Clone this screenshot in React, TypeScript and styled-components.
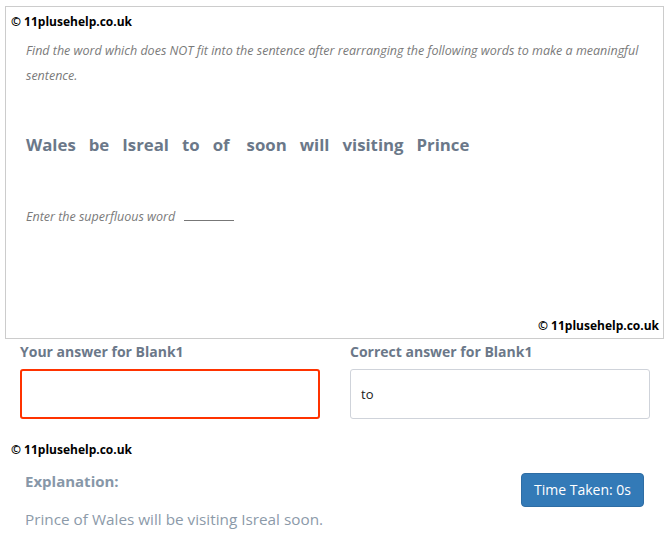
import React from "react";
import styled, { createGlobalStyle } from "styled-components";

const Global = createGlobalStyle`
  html, body { margin: 0; padding: 0; background: #fff; }
  body { font-family: "Open Sans", "Liberation Sans", sans-serif; }
  * { box-sizing: border-box; }
`;

const Page = styled.div`
  width: 669px;
  padding: 6px 5px 0 5px;
`;

const QuestionCard = styled.div`
  width: 659px;
  height: 333px;
  border: 1px solid #cccccc;
  display: flex;
  flex-direction: column;
`;

const Watermark = styled.div<{ $align?: "left" | "right" }>`
  font-family: "Open Sans", sans-serif;
  font-weight: 700;
  font-size: 12px;
  line-height: 16px;
  color: #000;
  text-align: ${(p) => p.$align ?? "left"};
`;

const TopMark = styled(Watermark)`
  padding: 7px 0 0 5px;
`;

const BottomMark = styled(Watermark)`
  margin-top: auto;
  padding: 0 4px 4px 0;
`;

const Instruction = styled.p`
  margin: 8px 0 0 0;
  padding: 0 10px 0 20px;
  font-style: italic;
  font-size: 12.5px;
  line-height: 25px;
  color: #7a7a7a;
`;

const WordRow = styled.div`
  display: flex;
  gap: 13px;
  padding-left: 20px;
  margin-top: 45px;
  font-size: 16.8px;
  font-weight: 700;
  line-height: 24px;
  color: #6b7889;
`;

const Word = styled.span<{ $extra?: boolean }>`
  margin-right: ${(p) => (p.$extra ? "4px" : "0")};
`;

const Prompt = styled.div`
  margin-top: 50px;
  padding-left: 20px;
  font-style: italic;
  font-size: 12.5px;
  line-height: 18px;
  color: #7a7a7a;
`;

const Blank = styled.span`
  display: inline-block;
  margin-left: 9px;
  width: 50px;
  border-bottom: 1px solid #777;
  height: 14px;
  vertical-align: baseline;
`;

const AnswerRow = styled.div`
  display: grid;
  grid-template-columns: 300px 300px;
  column-gap: 30px;
  padding: 3px 0 0 15px;
`;

const AnswerCol = styled.div`
  display: flex;
  flex-direction: column;
`;

const Label = styled.div`
  font-size: 14px;
  font-weight: 700;
  line-height: 20px;
  color: #6b7889;
  margin-bottom: 7px;
`;

const AnswerBox = styled.div<{ $wrong?: boolean }>`
  height: 50px;
  border: ${(p) => (p.$wrong ? "2px solid #ff3300" : "1px solid #cfd3da")};
  border-radius: 3px;
  display: flex;
  align-items: center;
  padding-left: 10px;
  font-size: 13px;
  color: #222;
`;

const MidMark = styled(Watermark)`
  margin-top: 23px;
  padding-left: 6px;
`;

const ExplainSection = styled.div`
  padding: 0 20px 0 20px;
  margin-top: 15px;
`;

const ExplainHeader = styled.div`
  display: flex;
  justify-content: space-between;
  align-items: center;
`;

const ExplainTitle = styled.div`
  font-size: 15px;
  font-weight: 700;
  color: #8797a8;
  line-height: 20px;
  margin-top: -18px;
`;

const TimeButton = styled.button`
  font-family: "Open Sans", sans-serif;
  font-size: 14px;
  line-height: 20px;
  color: #fff;
  background: #337ab7;
  border: 1px solid #2e6da4;
  border-radius: 4px;
  padding: 6px 12px;
  width: 123px;
  height: 34px;
`;

const ExplainText = styled.p`
  margin: 2px 0 0 0;
  font-size: 15.3px;
  line-height: 20px;
  color: #8c9aa9;
`;

const words: { w: string; extra?: boolean }[] = [
  { w: "Wales" },
  { w: "be" },
  { w: "Isreal" },
  { w: "to" },
  { w: "of", extra: true },
  { w: "soon" },
  { w: "will" },
  { w: "visiting" },
  { w: "Prince" },
];

export default function App() {
  return (
    <>
      <Global />
      <Page>
        <QuestionCard>
          <TopMark>© 11plusehelp.co.uk</TopMark>
          <Instruction>
            Find the word which does NOT fit into the sentence after rearranging the following words to make a meaningful
            sentence.
          </Instruction>
          <WordRow>
            {words.map((x) => (
              <Word key={x.w} $extra={x.extra}>
                {x.w}
              </Word>
            ))}
          </WordRow>
          <Prompt>
            Enter the superfluous word<Blank />
          </Prompt>
          <BottomMark $align="right">© 11plusehelp.co.uk</BottomMark>
        </QuestionCard>
        <AnswerRow>
          <AnswerCol>
            <Label>Your answer for Blank1</Label>
            <AnswerBox $wrong />
          </AnswerCol>
          <AnswerCol>
            <Label>Correct answer for Blank1</Label>
            <AnswerBox>to</AnswerBox>
          </AnswerCol>
        </AnswerRow>
        <MidMark>© 11plusehelp.co.uk</MidMark>
        <ExplainSection>
          <ExplainHeader>
            <ExplainTitle>Explanation:</ExplainTitle>
            <TimeButton>Time Taken: 0s</TimeButton>
          </ExplainHeader>
          <ExplainText>Prince of Wales will be visiting Isreal soon.</ExplainText>
        </ExplainSection>
      </Page>
    </>
  );
}
